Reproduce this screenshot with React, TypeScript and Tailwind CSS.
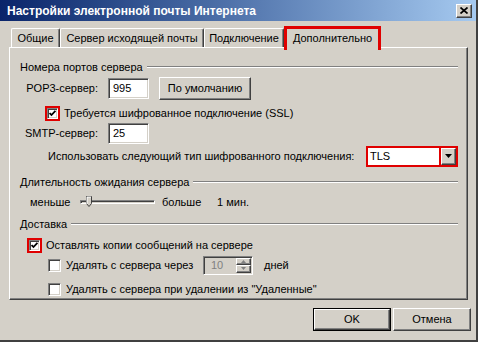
import React from "react";

const raised =
  "border border-t-white border-l-white border-r-[#404040] border-b-[#404040] shadow-[inset_-1px_-1px_#808080] bg-[#d4d0c8]";
const sunken =
  "border border-t-[#808080] border-l-[#808080] border-r-white border-b-white shadow-[inset_1px_1px_#404040,inset_-1px_-1px_#d4d0c8]";

function Check({ checked, size = 13 }: { checked?: boolean; size?: number }) {
  return (
    <span
      className={`flex shrink-0 items-center justify-center bg-white ${sunken}`}
      style={{ width: size, height: size }}
    >
      {checked && (
        <svg width="7" height="7" viewBox="0 0 7 7">
          <path d="M0.6 3 L2.5 5 L6.4 0.8" fill="none" stroke="#000" strokeWidth="1.8" />
        </svg>
      )}
    </span>
  );
}

function RedCheck() {
  return (
    <span className="flex h-[15px] w-[15px] shrink-0 items-center justify-center border-2 border-[#e00000]">
      <Check checked size={11} />
    </span>
  );
}

function GroupHeader({ label, mt }: { label: string; mt: string }) {
  return (
    <div className={`${mt} flex h-[16px] items-center pl-[10px] pr-[9px]`}>
      <span>{label}</span>
      <span className="ml-[4px] h-[2px] flex-1 border-t border-b border-t-[#808080] border-b-white" />
    </div>
  );
}

function Tab({ label, w, active }: { label: string; w: string; active?: boolean }) {
  if (active) {
    return (
      <div
        className={`${w} relative z-10 -mb-[3px] flex h-[24px] items-start justify-center border-3 border-b-0 border-[#e00000] bg-[#d4d0c8] pt-[4px]`}
      >
        {label}
      </div>
    );
  }
  return (
    <div
      className={`${w} flex h-[19px] items-center justify-center rounded-t-[2px] border-t border-l border-r border-t-white border-l-white border-r-[#404040] bg-[#d4d0c8] shadow-[inset_-1px_0_#808080]`}
    >
      {label}
    </div>
  );
}

export default function App() {
  return (
    <div className="flex h-[342px] w-[478px] flex-col overflow-hidden whitespace-nowrap border-r-2 border-b-2 border-r-[#404040] border-b-[#404040] bg-[#d4d0c8] font-['Liberation_Sans',Arial,sans-serif] text-[11px] leading-none text-black">
      {/* title bar */}
      <div className="flex h-[21px] items-center bg-linear-to-r from-[#0a246a] to-[#a6caf0] pl-[7px] pr-[4px]">
        <span className="text-[12px] font-bold text-white">Настройки электронной почты Интернета</span>
        <span className={`ml-auto flex h-[14px] w-[16px] items-center justify-center ${raised}`}>
          <svg width="8" height="7" viewBox="0 0 8 7">
            <path d="M0.5 0.5 L7.5 6.5 M7.5 0.5 L0.5 6.5" stroke="#000" strokeWidth="1.7" />
          </svg>
        </span>
      </div>

      {/* tabs */}
      <div className="mt-[5px] flex h-[21px] items-end pl-[11px]">
        <Tab label="Общие" w="w-[49px]" />
        <Tab label="Сервер исходящей почты" w="w-[144px]" />
        <Tab label="Подключение" w="w-[80px]" />
        <Tab label="Дополнительно" w="w-[97px]" active />
      </div>

      {/* panel */}
      <div className="ml-[9px] flex h-[253px] w-[459px] flex-col border border-t-white border-l-white border-r-[#404040] border-b-[#404040] shadow-[inset_-1px_-1px_#808080]">
        <GroupHeader label="Номера портов сервера" mt="mt-[11px]" />

        <div className="mt-[2px] flex h-[22px] items-center">
          <span className="w-[88px] text-right">POP3-сервер:</span>
          <span className={`ml-[10px] flex h-[21px] w-[41px] items-center bg-white pl-[4px] ${sunken}`}>995</span>
          <span className={`ml-[10px] flex h-[23px] w-[92px] items-center justify-center ${raised}`}>
            По умолчанию
          </span>
        </div>

        <div className="mt-[6px] flex h-[16px] items-center pl-[35px]">
          <RedCheck />
          <span className="ml-[4px]">Требуется шифрованное подключение (SSL)</span>
        </div>

        <div className="mt-[1px] flex h-[22px] items-center">
          <span className="w-[88px] text-right">SMTP-сервер:</span>
          <span className={`ml-[10px] flex h-[21px] w-[41px] items-center bg-white pl-[4px] ${sunken}`}>25</span>
        </div>

        <div className="mt-[1px] flex h-[22px] items-center pl-[38px] pr-[9px]">
          <span>Использовать следующий тип шифрованного подключения:</span>
          <span className="ml-auto flex h-[21px] w-[92px] border-2 border-[#e00000] bg-white">
            <span className="flex flex-1 items-center pl-[2px]">TLS</span>
            <span className="-my-[2px] -mr-[2px] flex w-[19px] border-2 border-[#e00000]">
              <span className={`flex flex-1 items-center justify-center ${raised}`}>
                <svg width="7" height="4" viewBox="0 0 7 4">
                  <path d="M0 0 H7 L3.5 4 Z" fill="#000" />
                </svg>
              </span>
            </span>
          </span>
        </div>

        <GroupHeader label="Длительность ожидания сервера" mt="mt-[7px]" />

        <div className="mt-[4px] flex h-[16px] items-center pl-[20px]">
          <span className="w-[50px]">меньше</span>
          <span className="relative flex h-[16px] w-[75px] items-center">
            <span className="h-[4px] w-full border border-t-[#808080] border-l-[#808080] border-r-white border-b-white shadow-[inset_1px_1px_#404040]" />
            <svg className="absolute left-[6px] top-[2px]" width="6" height="11" viewBox="0 0 6 11">
              <path d="M0.5 0.5 H5.5 V7.5 L3 10.5 L0.5 7.5 Z" fill="#d4d0c8" stroke="#404040" />
              <path d="M1 8 V1 H5" fill="none" stroke="#fff" />
            </svg>
          </span>
          <span className="ml-[7px] w-[55px]">больше</span>
          <span>1 мин.</span>
        </div>

        <GroupHeader label="Доставка" mt="mt-[6px]" />

        <div className="mt-[5px] flex h-[16px] items-center pl-[17px]">
          <RedCheck />
          <span className="ml-[4px]">Оставлять копии сообщений на сервере</span>
        </div>

        <div className="mt-[2px] flex h-[20px] items-center pl-[38px]">
          <Check />
          <span className="ml-[5px] w-[137px]">Удалять с сервера через</span>
          <span className={`flex h-[19px] w-[50px] items-stretch bg-[#d4d0c8] ${sunken}`}>
            <span className="flex flex-1 items-center pl-[7px] text-[#808080]">10</span>
            <span className="my-[1px] mr-[1px] flex w-[15px] flex-col">
              <span className={`flex flex-1 items-center justify-center ${raised}`}>
                <svg width="5" height="3" viewBox="0 0 5 3">
                  <path d="M0 3 H5 L2.5 0 Z" fill="#808080" />
                </svg>
              </span>
              <span className={`flex flex-1 items-center justify-center ${raised}`}>
                <svg width="5" height="3" viewBox="0 0 5 3">
                  <path d="M0 0 H5 L2.5 3 Z" fill="#808080" />
                </svg>
              </span>
            </span>
          </span>
          <span className="ml-[11px]">дней</span>
        </div>

        <div className="mt-[6px] flex h-[16px] items-center pl-[38px]">
          <Check />
          <span className="ml-[5px]">Удалять с сервера при удалении из "Удаленные"</span>
        </div>
      </div>

      {/* buttons */}
      <div className="mt-[8px] flex justify-end gap-[2px] pr-[5px]">
        <span className="flex h-[23px] w-[78px] border border-black">
          <span className={`flex flex-1 items-center justify-center ${raised}`}>OK</span>
        </span>
        <span className={`flex h-[23px] w-[78px] items-center justify-center ${raised}`}>Отмена</span>
      </div>
    </div>
  );
}
